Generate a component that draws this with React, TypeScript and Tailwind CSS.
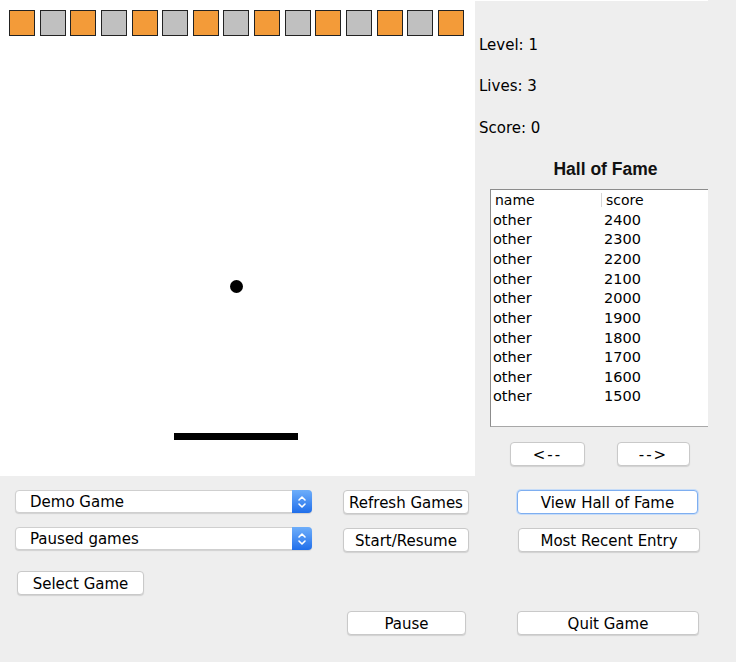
import React from "react";

const FONT = { fontFamily: '"DejaVu Sans", "Liberation Sans", sans-serif' };

const scores = [2400, 2300, 2200, 2100, 2000, 1900, 1800, 1700, 1600, 1500];

function Btn({ label, className = "", focus = false }: { label: string; className?: string; focus?: boolean }) {
  return (
    <div
      className={
        "h-[24px] pt-[2px] flex items-center justify-center rounded-[4px] bg-white text-[15px] text-black leading-none " +
        (focus
          ? "border border-[#7eaef0] shadow-[0_0_0_1px_#c6dcf8] "
          : "border border-[#c9c9c9] shadow-[0_1px_1px_rgba(0,0,0,0.12)] ") +
        className
      }
    >
      {label}
    </div>
  );
}

function Combo({ label }: { label: string }) {
  return (
    <div className="h-[23px] w-[297px] flex rounded-[4px] bg-white border border-[#cfcfcf] shadow-[0_1px_1px_rgba(0,0,0,0.12)]">
      <div className="flex-1 flex items-center pt-[2px] pl-[14px] text-[15px] text-black leading-none">{label}</div>
      <div className="w-[20px] -my-px -mr-px rounded-r-[4px] bg-gradient-to-b from-[#6eaefa] to-[#1f6eea] flex items-center justify-center">
        <svg width="10" height="16" viewBox="0 0 10 16">
          <path d="M2 6 L5 3 L8 6" stroke="white" strokeWidth="1.6" fill="none" strokeLinecap="round" strokeLinejoin="round" />
          <path d="M2 10 L5 13 L8 10" stroke="white" strokeWidth="1.6" fill="none" strokeLinecap="round" strokeLinejoin="round" />
        </svg>
      </div>
    </div>
  );
}

export default function App() {
  const bricks = Array.from({ length: 15 }, (_, i) => i);
  return (
    <div className="w-[736px] h-[662px] bg-[#eeeeee] overflow-hidden flex flex-col" style={FONT}>
      {/* top section */}
      <div className="flex h-[476px]">
        <div className="relative w-[475px] h-[476px] bg-white">
          {bricks.map((i) => (
            <div
              key={i}
              className={
                "absolute top-[10px] w-[26px] h-[26px] border-[1.5px] border-[#222] " +
                (i % 2 === 0 ? "bg-[#f39b39]" : "bg-[#c0c0c0]")
              }
              style={{ left: Math.round(9 + i * 30.64) }}
            />
          ))}
          <div className="absolute left-[230px] top-[280px] w-[13px] h-[13px] rounded-full bg-black" />
          <div className="absolute left-[174px] top-[433px] w-[124px] h-[7px] bg-black" />
        </div>
        <div className="flex-1 flex flex-col">
          <div className="h-px w-[233px] bg-white" />
          <div className="pl-[4px] mt-[35px] text-[15px] leading-[18px] text-black">Level: 1</div>
          <div className="pl-[4px] mt-[23px] text-[15px] leading-[18px] text-black">Lives: 3</div>
          <div className="pl-[4px] mt-[24px] text-[15px] leading-[18px] text-black">Score: 0</div>
          <div
            className="mt-[22px] text-center text-[17.5px] leading-[20px] font-bold text-[#111]"
            style={{ fontFamily: '"Liberation Sans", Arial, sans-serif' }}
          >
            Hall of Fame
          </div>
          <div className="ml-[15px] mt-[10px] w-[218px] h-[238px] bg-white border-l border-t border-b border-l-[#8c8c8c] border-t-[#8c8c8c] border-b-[#a8a8a8] text-[14.5px] text-black">
            <div className="flex h-[20px] items-center">
              <div className="w-[110px] pl-[4px] leading-none text-[14px]">name</div>
              <div className="w-px h-[14px] bg-[#d6d6d6]" />
              <div className="pl-[4px] leading-none text-[14px]">score</div>
            </div>
            {scores.map((s) => (
              <div key={s} className="flex h-[19.67px] items-center">
                <div className="w-[111px] pl-[2px] leading-none">other</div>
                <div className="pl-[2px] leading-none">{s}</div>
              </div>
            ))}
          </div>
          <div className="flex mt-[15px]">
            <Btn label="<--" className="ml-[35px] w-[75px] h-[23px] tracking-[2px]" />
            <Btn label="-->" className="ml-[32px] w-[73px] h-[23px] tracking-[2px]" />
          </div>
        </div>
      </div>

      {/* bottom controls */}
      <div className="grid grid-cols-[15px_297px_31px_126px_48px_182px] pt-[14px]">
        <div className="col-start-2 row-start-1">
          <Combo label="Demo Game" />
        </div>
        <div className="col-start-4 row-start-1">
          <Btn label="Refresh Games" className="w-[126px]" />
        </div>
        <div className="col-start-6 row-start-1">
          <Btn label="View Hall of Fame" focus className="w-[181px]" />
        </div>

        <div className="col-start-2 row-start-2 mt-[13px]">
          <Combo label="Paused games" />
        </div>
        <div className="col-start-4 row-start-2 mt-[14px]">
          <Btn label="Start/Resume" className="w-[126px]" />
        </div>
        <div className="col-start-6 row-start-2 mt-[14px]">
          <Btn label="Most Recent Entry" className="w-[182px] ml-px" />
        </div>

        <div className="col-start-2 row-start-3 mt-[19px]">
          <Btn label="Select Game" className="w-[127px] ml-[2px]" />
        </div>

        <div className="col-start-4 row-start-4 mt-[16px]">
          <Btn label="Pause" className="w-[119px] ml-[4px] h-[23px]" />
        </div>
        <div className="col-start-6 row-start-4 mt-[16px]">
          <Btn label="Quit Game" className="w-[182px] h-[23px]" />
        </div>
      </div>
    </div>
  );
}
